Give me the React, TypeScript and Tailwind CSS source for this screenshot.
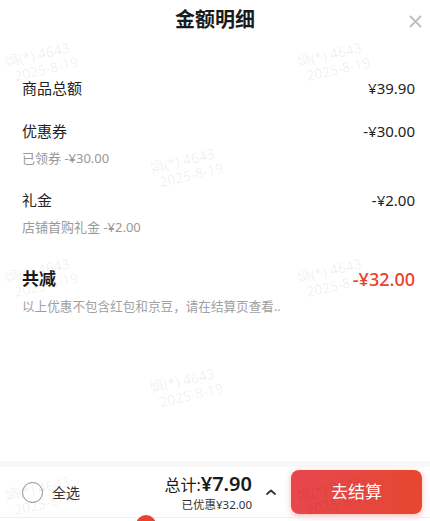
const font = { fontFamily: '"Noto Sans", "Noto Sans CJK SC", sans-serif' };

const marks = [
  { x: 6, y: 46 },
  { x: 298, y: 46 },
  { x: 151, y: 152 },
  { x: 6, y: 262 },
  { x: 298, y: 262 },
  { x: 151, y: 372 },
  { x: 6, y: 480 },
  { x: 298, y: 480 },
];

function Watermark({ x, y }: { x: number; y: number }) {
  return (
    <div
      className="pointer-events-none absolute -rotate-[13deg] text-[14px] leading-[16px] text-black/[0.07]"
      style={{ left: x, top: y }}
    >
      <div>娟(*) 4643</div>
      <div className="pl-[6px]">2025-8-19</div>
    </div>
  );
}

function Row({ label, value, sub }: { label: string; value: string; sub?: string }) {
  return (
    <div>
      <div className="flex items-center justify-between text-[15px] leading-[20px] text-[#222]">
        <span>{label}</span>
        <span>{value}</span>
      </div>
      {sub && <div className="mt-[9px] text-[13px] leading-[16px] text-[#999]">{sub}</div>}
    </div>
  );
}

export default function App() {
  return (
    <div className="relative flex h-[521px] w-full flex-col overflow-hidden bg-white" style={font}>
      {/* header */}
      <div className="relative flex h-[40px] items-center justify-center">
        <h1 className="text-[20px] font-semibold text-[#1a1a1a]">金额明细</h1>
        <svg className="absolute right-[8px] top-[15px]" width="13" height="13" viewBox="0 0 13 13">
          <path d="M1.5 1.5L11.5 11.5M11.5 1.5L1.5 11.5" stroke="#bdbdbd" strokeWidth="1.8" strokeLinecap="round" />
        </svg>
      </div>

      {/* detail rows */}
      <div className="flex flex-col px-[22px] pr-[15px] pt-[38px]">
        <Row label="商品总额" value="¥39.90" />
        <div className="mt-[23px]">
          <Row label="优惠券" value="-¥30.00" sub="已领券 -¥30.00" />
        </div>
        <div className="mt-[24px]">
          <Row label="礼金" value="-¥2.00" sub="店铺首购礼金 -¥2.00" />
        </div>
        <div className="mt-[32px] flex items-center justify-between leading-[24px]">
          <span className="text-[17px] font-semibold text-[#1a1a1a]">共减</span>
          <span className="text-[18px] font-medium text-[#e8412c]">-¥32.00</span>
        </div>
        <div className="mt-[8px] text-[12.6px] leading-[16px] text-[#a0a0a0]">
          以上优惠不包含红包和京豆，请在结算页查看..
        </div>
      </div>

      <div className="flex-1" />

      {/* bottom bar */}
      <div className="flex h-[56px] items-center border-t-[6px] border-[#f8f8f8] pl-[22px] pr-[8px]">
        <div className="flex items-center gap-[9px]">
          <div className="h-[21px] w-[21px] rounded-full border-[1.5px] border-[#8a8a8a]" />
          <span className="text-[14px] text-[#333]">全选</span>
        </div>
        <div className="ml-auto flex flex-col items-end">
          <div className="flex items-baseline leading-[24px] text-[#1a1a1a]">
            <span className="text-[16px]">总计:</span>
            <span className="text-[20px] font-semibold">¥7.90</span>
          </div>
          <span className="text-[11.5px] leading-[15px] text-[#333]">已优惠¥32.00</span>
        </div>
        <svg className="ml-[13px] mr-[14px]" width="12" height="8" viewBox="0 0 12 8">
          <path d="M2 6L6 2.5L10 6" fill="none" stroke="#333" strokeWidth="1.8" strokeLinecap="round" strokeLinejoin="round" />
        </svg>
        <button className="flex h-[44px] w-[131px] items-center justify-center rounded-[8px] bg-gradient-to-r from-[#e8474d] to-[#e5472f] text-[17px] text-white shadow-[0_2px_6px_rgba(229,67,47,0.35)]">
          去结算
        </button>
      </div>
      <div className="relative h-[4px] border-t border-[#eeeeee]">
        <div className="absolute left-[136px] top-[-3px] h-[20px] w-[20px] rounded-full bg-[#e8412c]" />
      </div>

      {marks.map((m, i) => (
        <Watermark key={i} x={m.x} y={m.y} />
      ))}
    </div>
  );
}
